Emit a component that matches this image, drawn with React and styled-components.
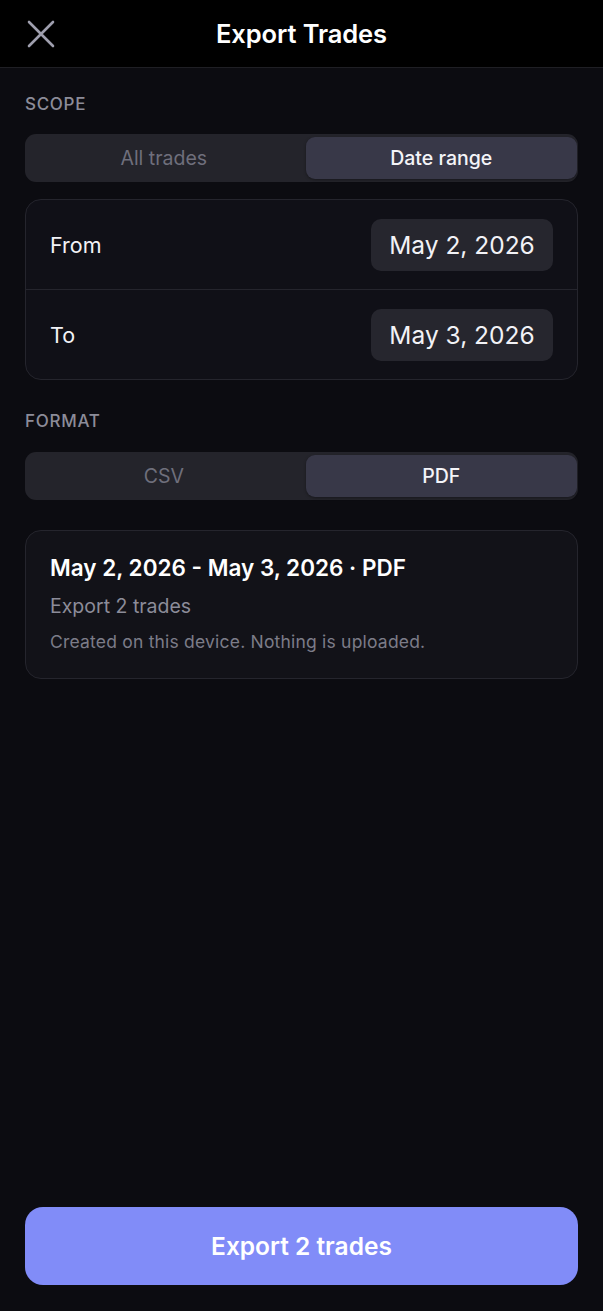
import React, { useState } from 'react';
import styled, { createGlobalStyle } from 'styled-components';

const GlobalStyle = createGlobalStyle`
    html, body {
        margin: 0;
        padding: 0;
        background: #0c0c11;
    }
    body {
        font-family: Inter, "Noto Sans", "Liberation Sans", sans-serif;
        -webkit-font-smoothing: antialiased;
    }
`;

const Screen = styled.div`
    width: 603px;
    height: 1311px;
    display: flex;
    flex-direction: column;
    background: #0c0c11;
    color: #fff;
`;

const Header = styled.div`
    height: 67px;
    flex-shrink: 0;
    display: grid;
    grid-template-columns: 80px 1fr 80px;
    align-items: center;
    background: #000;
    border-bottom: 1px solid #1f1f24;
`;

const CloseButton = styled.button`
    background: none;
    border: none;
    padding: 0 0 0 27px;
    display: flex;
    align-items: center;
    cursor: pointer;
`;

const Title = styled.h1`
    margin: 0;
    text-align: center;
    font-size: 25.5px;
    font-weight: 600;
    letter-spacing: -0.1px;
    color: #fff;
`;

const Body = styled.div`
    flex: 1;
    display: flex;
    flex-direction: column;
    padding: 25px 25px 0;
`;

const SectionLabel = styled.div`
    font-size: 17px;
    font-weight: 500;
    color: #8c8c99;
    letter-spacing: 0.7px;
    text-transform: uppercase;
    line-height: 22px;
    margin-bottom: ${(props) => props.gap || 20}px;
`;

const Segmented = styled.div`
    display: grid;
    grid-template-columns: 1fr 1fr;
    gap: 6px;
    height: 48px;
    padding: 3px 1px 3px 3px;
    box-sizing: border-box;
    background: #24242b;
    border-radius: 11px;
`;

const Segment = styled.button`
    border: none;
    border-radius: 9px;
    font-family: inherit;
    font-size: 19.5px;
    font-weight: ${(props) => (props.active ? 500 : 400)};
    color: ${(props) => (props.active ? '#f4f4f8' : '#6f6f7c')};
    background: ${(props) => (props.active ? '#383848' : 'transparent')};
    box-shadow: ${(props) => (props.active ? '0 1px 3px rgba(0,0,0,0.35)' : 'none')};
    cursor: pointer;
`;

const Card = styled.div`
    border: 1px solid #25252d;
    border-radius: 16px;
    background: #101017;
    margin-top: ${(props) => props.top || 0}px;
`;

const DateRow = styled.div`
    height: 89px;
    display: flex;
    align-items: center;
    justify-content: space-between;
    padding: 0 24px;
    & + & {
        border-top: 1px solid #25252d;
    }
`;

const RowLabel = styled.span`
    font-size: 21.5px;
    color: #f2f2f6;
`;

const DatePill = styled.button`
    height: 52px;
    width: 182px;
    border: none;
    border-radius: 10px;
    background: #26262e;
    color: #f2f2f6;
    font-family: inherit;
    font-size: 24.5px;
    font-weight: 400;
    cursor: pointer;
`;

const Summary = styled(Card)`
    background: #121218;
    padding: 21px 24px 24px;
`;

const SummaryTitle = styled.div`
    font-size: 22.5px;
    font-weight: 600;
    color: #fff;
    line-height: 32px;
`;

const SummaryCount = styled.div`
    font-size: 19.5px;
    color: #8c8c99;
    line-height: 28px;
    margin-top: 8px;
`;

const SummaryNote = styled.div`
    font-size: 17.5px;
    letter-spacing: 0.2px;
    color: #7c7c88;
    line-height: 24px;
    margin-top: 10px;
`;

const Footer = styled.div`
    padding: 0 25px 26px;
`;

const ExportButton = styled.button`
    width: 100%;
    height: 78px;
    border: none;
    border-radius: 18px;
    background: #818cf8;
    color: #fff;
    font-family: inherit;
    font-size: 24.5px;
    font-weight: 600;
    cursor: pointer;
`;

const CloseIcon = () => (
    <svg width="28" height="28" viewBox="0 0 28 28" fill="none">
        <path d="M2 2 L26 26 M26 2 L2 26" stroke="#9f9fae" strokeWidth="2.6" strokeLinecap="round" />
    </svg>
);

const App = () => {
    const [scope, setScope] = useState('range');
    const [format, setFormat] = useState('pdf');
    const from = 'May 2, 2026';
    const to = 'May 3, 2026';

    return (
        <Screen>
            <GlobalStyle />
            <Header>
                <CloseButton aria-label="Close"><CloseIcon /></CloseButton>
                <Title>Export Trades</Title>
                <div />
            </Header>
            <Body>
                <SectionLabel gap={19}>Scope</SectionLabel>
                <Segmented>
                    <Segment active={scope === 'all'} onClick={() => setScope('all')}>All trades</Segment>
                    <Segment active={scope === 'range'} onClick={() => setScope('range')}>Date range</Segment>
                </Segmented>
                <Card top={17}>
                    <DateRow>
                        <RowLabel>From</RowLabel>
                        <DatePill>{from}</DatePill>
                    </DateRow>
                    <DateRow>
                        <RowLabel>To</RowLabel>
                        <DatePill>{to}</DatePill>
                    </DateRow>
                </Card>
                <div style={{ height: 30 }} />
                <SectionLabel gap={20}>Format</SectionLabel>
                <Segmented>
                    <Segment active={format === 'csv'} onClick={() => setFormat('csv')}>CSV</Segment>
                    <Segment active={format === 'pdf'} onClick={() => setFormat('pdf')}>PDF</Segment>
                </Segmented>
                <Summary top={30}>
                    <SummaryTitle>{from} - {to} · {format.toUpperCase()}</SummaryTitle>
                    <SummaryCount>Export 2 trades</SummaryCount>
                    <SummaryNote>Created on this device. Nothing is uploaded.</SummaryNote>
                </Summary>
            </Body>
            <Footer>
                <ExportButton>Export 2 trades</ExportButton>
            </Footer>
        </Screen>
    );
};

export default App;
